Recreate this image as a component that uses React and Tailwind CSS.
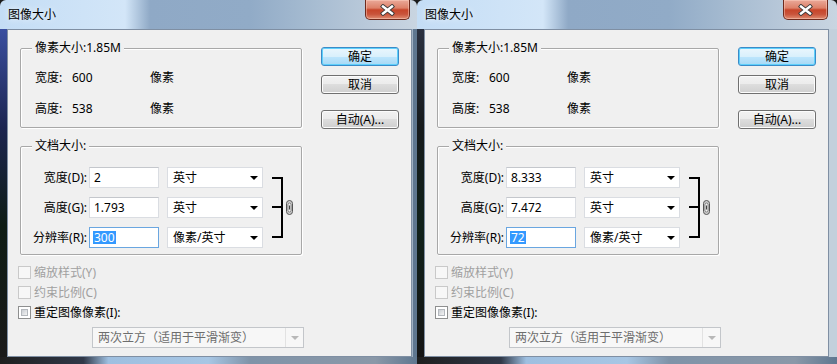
import React from 'react';

const font = "font-['Noto_Sans','Noto_Sans_CJK_SC',sans-serif]";

function CloseButton({ className }) {
    return (
        <div className={`w-[45px] h-[20px] rounded-b-[5px] border border-t-0 border-[#6e2a1d] bg-[linear-gradient(to_bottom,#eaa999_0%,#dd8169_42%,#c7452a_52%,#c9543b_75%,#e08d72_100%)] shadow-[inset_0_0_0_1px_rgba(255,215,200,0.45)] flex items-center justify-center ${className}`}>
            <svg width="15" height="12" viewBox="0 0 15 12">
                <path d="M3 2.5 L12 9.5 M12 2.5 L3 9.5" stroke="#3a3a3a" strokeWidth="4.2" strokeLinecap="square" />
                <path d="M3 2.5 L12 9.5 M12 2.5 L3 9.5" stroke="#ffffff" strokeWidth="2.4" strokeLinecap="square" />
            </svg>
        </div>
    );
}

function Group({ title, className, children }) {
    return (
        <div className={`relative border border-[#a8a8a8] rounded-[2px] shadow-[inset_1px_1px_0_#ffffff,1px_1px_0_#ffffff] ${className}`}>
            <span className="absolute left-[11px] -top-[9px] px-[3px] bg-[#f0f0f0] leading-[16px] text-black">{title}</span>
            {children}
        </div>
    );
}

function Field({ value, focused }) {
    if (focused) {
        return (
            <div className="w-[70px] h-[21px] bg-white border border-[#6aa6e0] flex items-center pl-[3px]">
                <span className="bg-[#3399ff] text-white leading-[13px] px-[1px]">{value}</span>
            </div>
        );
    }
    return (
        <div className="w-[70px] h-[21px] bg-white border border-[#dadde2] border-t-[#c4c7cc] flex items-center pl-[4px] leading-[16px]">
            {value}
        </div>
    );
}

function Select({ value }) {
    return (
        <div className="w-[96px] h-[21px] bg-white border border-[#dadde2] flex items-center pl-[5px] pr-[4px] leading-[16px]">
            <span className="flex-1">{value}</span>
            <span className="mt-[1px] w-0 h-0 border-l-[4px] border-r-[4px] border-t-[4px] border-l-transparent border-r-transparent border-t-black" />
        </div>
    );
}

function Check({ label, enabled }) {
    return (
        <div className="h-[20px]">
            <div className="h-[13px] flex items-center gap-[3px]">
                {enabled ? (
                    <div className="w-[13px] h-[13px] border border-[#8e8f8f] bg-white p-[2px]">
                        <div className="w-full h-full bg-[linear-gradient(135deg,#c9cdd2,#f4f4f4)] border border-[#b4b8bd]" />
                    </div>
                ) : (
                    <div className="w-[13px] h-[13px] border border-[#c9c9c9] bg-[#f7f7f7]" />
                )}
                <span className={enabled ? 'leading-[13px] text-black' : 'leading-[13px] text-[#a0a0a0]'}>{label}</span>
            </div>
        </div>
    );
}

function Button({ children, primary, className }) {
    return (
        <div
            className={
                primary
                    ? `w-[78px] h-[19px] rounded-[3px] border border-[#3a8bc8] bg-[linear-gradient(to_bottom,#eaf6fd_0%,#d9f0fc_50%,#bee6fd_50%,#a7d9f5_100%)] shadow-[inset_0_0_0_1px_#5fd0fb] flex items-center justify-center leading-[16px] ${className}`
                    : `w-[78px] h-[19px] rounded-[3px] border border-[#707070] bg-[linear-gradient(to_bottom,#f2f2f2_0%,#ebebeb_50%,#dddddd_50%,#cfcfcf_100%)] shadow-[inset_0_0_0_1px_#fcfcfc] flex items-center justify-center leading-[16px] ${className}`
            }
        >
            {children}
        </div>
    );
}

function Bracket() {
    return (
        <svg width="26" height="80" viewBox="0 0 26 80" className="ml-[9px]">
            <path d="M0 11 H10 V70 H0 M0 40 H9" stroke="#000" strokeWidth="2" fill="none" />
            <rect x="14.5" y="33.5" width="6" height="14" rx="3" fill="#cfcfcf" stroke="#555" />
            <rect x="16" y="36" width="3" height="9" rx="1.5" fill="#f4f4f4" stroke="#666" strokeWidth="0.8" />
            <path d="M17.5 38.5 V42.5" stroke="#444" strokeWidth="1" />
        </svg>
    );
}

function Client({ width, height, res }) {
    const rows = [
        { label: '宽度(D):', value: width, unit: '英寸' },
        { label: '高度(G):', value: height, unit: '英寸' },
        { label: '分辨率(R):', value: res, unit: '像素/英寸', focused: true },
    ];
    return (
        <div className="w-[405px] h-[328px] bg-[#f0f0f0] border border-[#7f8fa3] pt-[17px] pl-[10px] flex flex-col text-[12px] text-black">
            <div className="flex">
                <div className="ml-[2px] w-[282px]">
                    <Group title="像素大小:1.85M" className="mt-[1px] h-[80px] pl-[14px] pt-[21px]">
                        <div className="grid grid-cols-[37px_78px_auto] gap-y-[15px] leading-[16px]">
                            <span>宽度:</span>
                            <span>600</span>
                            <span>像素</span>
                            <span>高度:</span>
                            <span>538</span>
                            <span>像素</span>
                        </div>
                    </Group>
                    <Group title="文档大小:" className="mt-[18px] h-[109px] pt-[20px]">
                        <div className="flex">
                            <div className="flex flex-col gap-[9px]">
                                {rows.map((r) => (
                                    <div key={r.label} className="flex items-center h-[21px]">
                                        <span className="w-[68px] text-right pr-[2px] leading-[16px]">{r.label}</span>
                                        <Field value={r.value} focused={r.focused} />
                                        <div className="ml-[8px]">
                                            <Select value={r.unit} />
                                        </div>
                                    </div>
                                ))}
                            </div>
                            <Bracket />
                        </div>
                    </Group>
                </div>
                <div className="ml-[19px] flex flex-col">
                    <Button primary>确定</Button>
                    <Button className="mt-[9px]">取消</Button>
                    <Button className="mt-[16px]">自动(A)...</Button>
                </div>
            </div>
            <div className="mt-[11px] flex flex-col">
                <Check label="缩放样式(Y)" />
                <Check label="约束比例(C)" />
                <Check label="重定图像像素(I):" enabled />
            </div>
            <div className="ml-[74px] mt-[1px] w-[212px] h-[21px] border border-[#c3c6ca] bg-[#f7f7f7] flex items-center text-[#6d6d6d]">
                <span className="flex-1 pl-[5px] leading-[16px]">两次立方（适用于平滑渐变）</span>
                <span className="w-[18px] h-full border-l border-[#e2e2e2] flex items-center justify-center">
                    <span className="w-0 h-0 border-l-[4px] border-r-[4px] border-t-[4px] border-l-transparent border-r-transparent border-t-[#b8b8b8]" />
                </span>
            </div>
        </div>
    );
}

function Dialog({ width, height, res, wide }) {
    return (
        <div className={`${wide ? 'w-[420px]' : 'w-[417px]'} h-[364px] flex flex-col rounded-t-[6px] overflow-hidden bg-[linear-gradient(to_right,#c4ddf5_0%,#d3e6f8_30%,#8fa9c6_36%,#91abc7_60%,#a8bdd2_76%,#bccbdb_90%,#c9d5e1_100%)]`}>
            <div className="h-[29px] flex items-start">
                <span className="pl-[8px] pt-[7px] leading-[16px] text-[12px] text-black [text-shadow:0_0_6px_#ffffff]">图像大小</span>
                <div className="flex-1" />
                <CloseButton className={wide ? 'mr-[9px]' : 'mr-[7px]'} />
            </div>
            <div className="flex">
                <div className={wide ? 'w-[7px] bg-[linear-gradient(to_bottom,#2b3140,#161a1c_30%,#10211a_60%,#151515)]' : 'w-[7px] bg-[linear-gradient(to_bottom,#3a4fa0,#1c2550_30%,#0e1c14_60%,#1a1a1a)]'} />
                <Client width={width} height={height} res={res} />
                <div className={wide ? 'flex-1 bg-[#c3d0dc]' : 'flex-1 bg-[#5f7790] border-l border-[#9fb0c2]'} />
            </div>
            <div className="flex-1 bg-[linear-gradient(to_right,#1e1e1e_0%,#303848_20%,#9ebfe0_26%,#a7c6e4_50%,#7f93a8_60%,#8a98a8_90%,#5f7790_100%)]" />
        </div>
    );
}

export default function App() {
    return (
        <div className={`w-[837px] h-[364px] flex overflow-hidden bg-[#1a1a1a] ${font}`}>
            <Dialog width="2" height="1.793" res="300" />
            <Dialog width="8.333" height="7.472" res="72" wide />
        </div>
    );
}
